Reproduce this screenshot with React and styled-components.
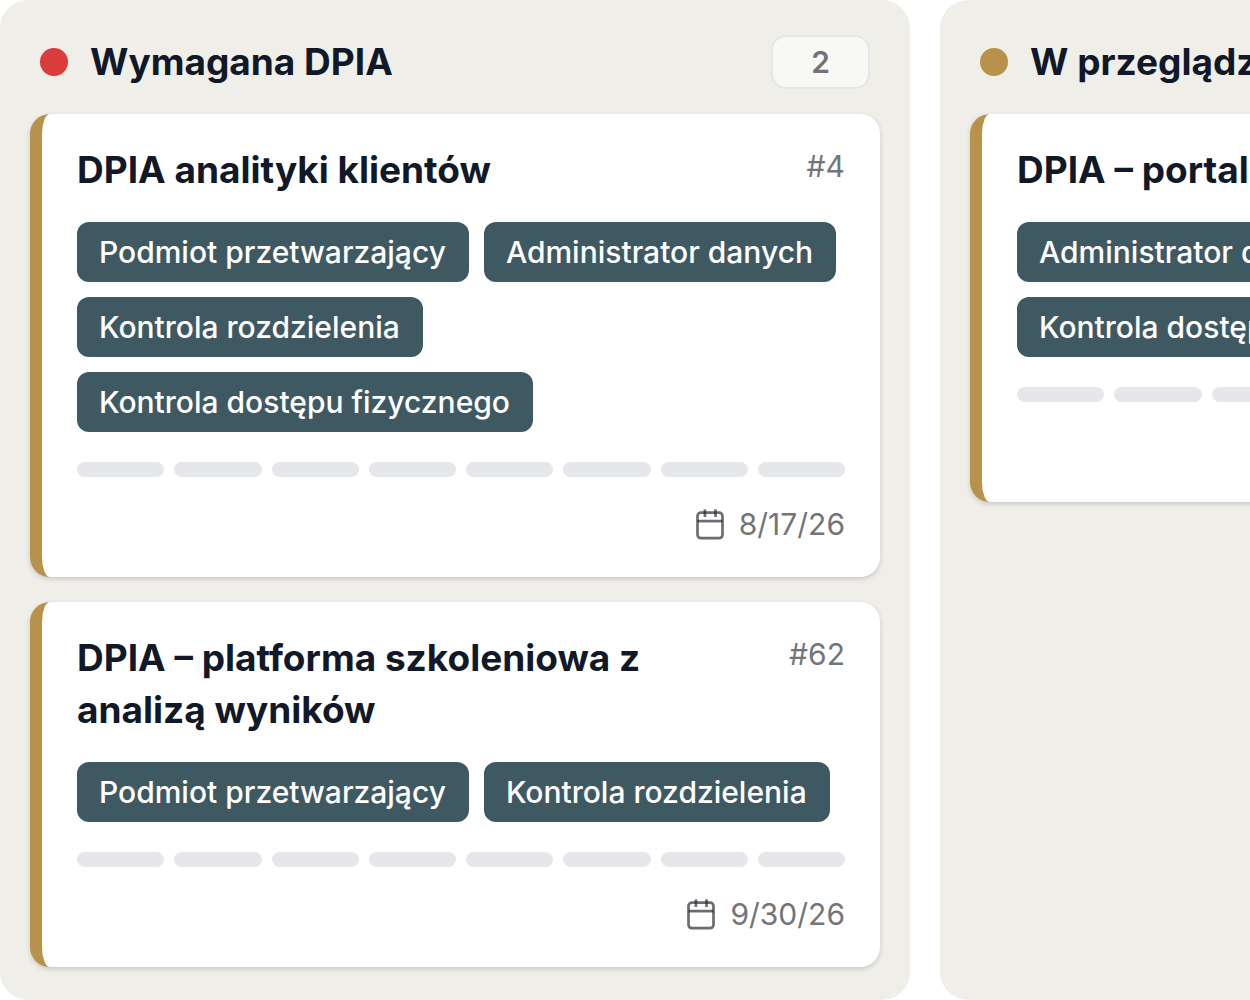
import React from 'react';
import styled, { createGlobalStyle } from 'styled-components';

const GlobalStyle = createGlobalStyle`
	* {
		box-sizing: border-box;
	}

	body {
		margin: 0;
		background-color: #fff;
		color: #111827;
		font-family: Inter, "Liberation Sans", sans-serif;
	}
`;

const Board = styled.main`
	display: flex;
	gap: 30px;
	min-height: 100vh;
	overflow-x: auto;
	scrollbar-width: none;
`;

const Column = styled.section`
	flex: 0 0 clamp(320px, 73vw, 910px);
	padding: 35px 30px 33px;
	border-radius: 28px;
	background-color: #efeee9;
`;

const ColumnHeader = styled.header`
	display: flex;
	align-items: center;
	gap: 22px;
	min-height: 54px;
	padding: 0 10px;
	margin-bottom: 25px;
`;

const Dot = styled.span`
	width: 28px;
	height: 28px;
	border-radius: 50%;
	background-color: ${({ $color }) => $color};
`;

const ColumnTitle = styled.h2`
	flex: 1;
	margin: 0;
	font-size: 37px;
	font-weight: 700;
	line-height: 52px;
	white-space: nowrap;
`;

const Count = styled.span`
	width: 99px;
	border: 2px solid #e6e6ea;
	border-radius: 15px;
	background-color: #f8f8f7;
	color: #737373;
	font-size: 30px;
	font-weight: 600;
	line-height: 50px;
	text-align: center;
`;

const CardList = styled.div`
	display: flex;
	flex-direction: column;
	gap: 25px;
`;

const Card = styled.article`
	padding: 30px 35px;
	border-left: 12px solid #b8924a;
	border-radius: 20px;
	background-color: #fff;
	box-shadow: 0 2px 5px rgba(0, 0, 0, 0.16);
`;

const CardHead = styled.div`
	display: flex;
	justify-content: space-between;
	gap: 20px;
	margin-bottom: 26px;
`;

const CardTitle = styled.h3`
	max-width: 600px;
	margin: 0;
	font-size: 37px;
	font-weight: 700;
	line-height: 52px;
`;

const CardId = styled.span`
	color: #737578;
	font-size: 30px;
	line-height: 45px;
`;

const Tags = styled.ul`
	display: flex;
	flex-wrap: wrap;
	gap: 15px;
	margin: 0 0 30px;
	padding: 0;
	list-style: none;
`;

const Tag = styled.li`
	padding: 0 23px 0 22px;
	border-radius: 12px;
	background-color: #3f5963;
	color: #fff;
	font-size: 30px;
	font-weight: 500;
	line-height: 60px;
	white-space: nowrap;
`;

const Progress = styled.div`
	display: grid;
	grid-template-columns: repeat(8, 1fr);
	gap: 10px;
	margin-bottom: 25px;
`;

const Step = styled.span`
	height: 15px;
	border-radius: 8px;
	background-color: #e5e7ea;
`;

const CardFooter = styled.footer`
	display: flex;
	align-items: center;
	justify-content: flex-end;
	gap: 15px;
	min-height: 45px;
	color: #737578;
	font-size: 30px;
	line-height: 45px;
`;

const CalendarIcon = () => (
	<svg width="28" height="32" viewBox="0 0 28 32" fill="none" stroke="#27272f" strokeOpacity="0.68" strokeWidth="2.7" aria-hidden="true">
		<rect x="1.5" y="3.6" width="25" height="25.6" rx="3.4" />
		<path d="M1.5 12.1h25" />
		<path d="M8.9 0.4v7.6" />
		<path d="M19.5 0.4v7.6" />
	</svg>
);

const columns = [
	{
		title: 'Wymagana DPIA',
		color: '#da3b3b',
		count: 2,
		cards: [
			{
				id: 4,
				title: 'DPIA analityki klientów',
				tags: [
					'Podmiot przetwarzający',
					'Administrator danych',
					'Kontrola rozdzielenia',
					'Kontrola dostępu fizycznego',
				],
				date: '8/17/26',
			},
			{
				id: 62,
				title: 'DPIA – platforma szkoleniowa z analizą wyników',
				tags: ['Podmiot przetwarzający', 'Kontrola rozdzielenia'],
				date: '9/30/26',
			},
		],
	},
	{
		title: 'W przeglądzie',
		color: '#b8924a',
		cards: [
			{
				title: 'DPIA – portal',
				tags: ['Administrator danych', 'Kontrola dostępu fizycznego'],
			},
		],
	},
];

const TaskCard = ({ id, title, tags, date }) => (
	<Card>
		<CardHead>
			<CardTitle>{title}</CardTitle>
			{id && <CardId>#{id}</CardId>}
		</CardHead>
		<Tags>
			{tags.map((tag) => (
				<Tag key={tag}>{tag}</Tag>
			))}
		</Tags>
		<Progress>
			{Array.from({ length: 8 }, (_, i) => (
				<Step key={i} />
			))}
		</Progress>
		<CardFooter>
			{date && (
				<>
					<CalendarIcon />
					<time>{date}</time>
				</>
			)}
		</CardFooter>
	</Card>
);

const App = () => {
	return (
		<>
			<GlobalStyle />
			<Board>
				{columns.map((column) => (
					<Column key={column.title}>
						<ColumnHeader>
							<Dot $color={column.color} />
							<ColumnTitle>{column.title}</ColumnTitle>
							{column.count && <Count>{column.count}</Count>}
						</ColumnHeader>
						<CardList>
							{column.cards.map((card) => (
								<TaskCard key={card.title} {...card} />
							))}
						</CardList>
					</Column>
				))}
			</Board>
		</>
	);
};

export default App;
